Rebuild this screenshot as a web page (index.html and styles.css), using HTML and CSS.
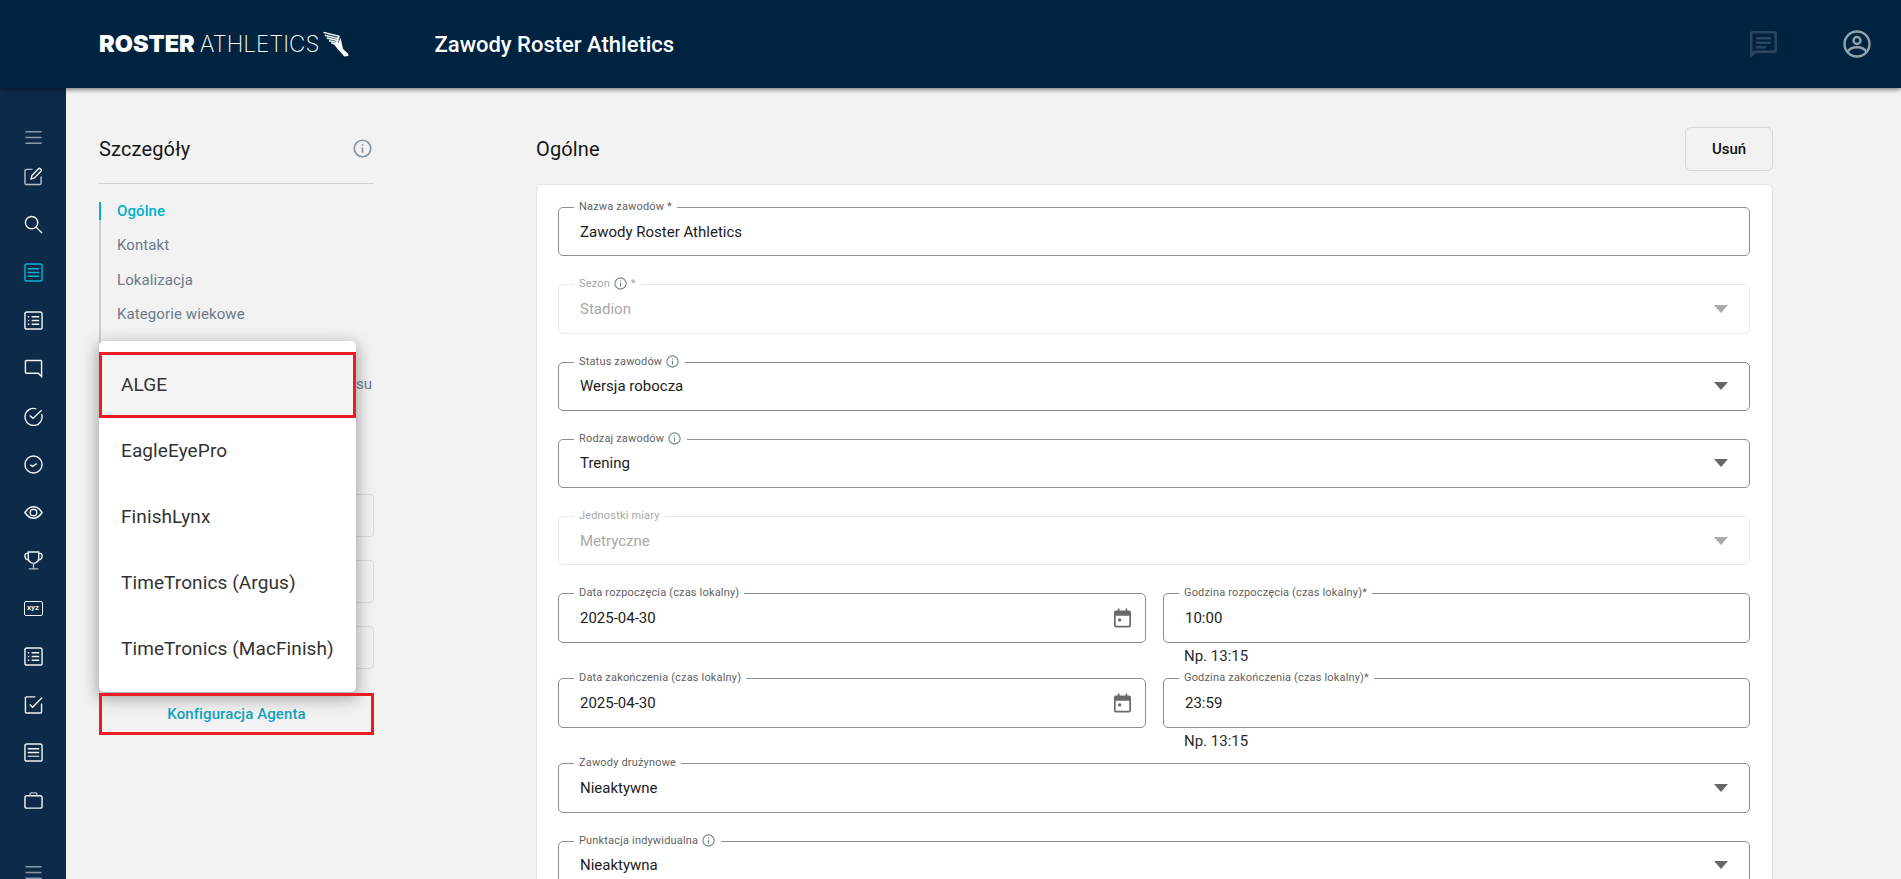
FILE: index.html
```html
<!DOCTYPE html>
<html lang="pl">
<head>
<meta charset="utf-8">
<title>Zawody Roster Athletics</title>
<link rel="stylesheet" href="styles.css">
</head>
<body>
<header class="topbar">
  <div class="logo">
    <span class="logo-bold">ROSTER</span><span class="logo-light">ATHLETICS</span>
    <svg class="logo-wing" viewBox="0 0 28 28" aria-hidden="true">
      <path class="wing-fill" d="M12 14.500 L15.500 19 L23 27.500 L27.500 27 L27 24.500 L21.500 19 L19 7.500 L17 12 Z"/>
      <path class="wing-line" d="M0.500 1.500 L18 6 M2 4.500 L17.500 8.500 M4 7.500 L17 10.500 M6.500 10.500 L16 12.500 M9 13 L15 14.500 M17 6 L14 14"/>
    </svg>
  </div>
  <h1 class="app-title">Zawody Roster Athletics</h1>
  <div class="top-actions">
    <svg class="top-chat" viewBox="0 0 27 27" aria-hidden="true"><path d="M3 0h21a3 3 0 0 1 3 3v16a3 3 0 0 1-3 3H6l-6 5V3a3 3 0 0 1 3-3Zm0 2.500a.5.5 0 0 0-.5.5v18l2.500-1.500h19a.5.5 0 0 0 .5-.5V3a.5.5 0 0 0-.5-.5ZM6 6h15v2.500H6Zm0 4.500h15V13H6ZM6 15h10v2.500H6Z"/></svg>
    <svg class="top-user" viewBox="0 0 28 28" aria-hidden="true"><circle cx="14" cy="14" r="12.500"/><circle cx="14" cy="10.500" r="3.500"/><path d="M4.500 22c2-3.500 5.500-4.800 9.500-4.800s7.500 1.300 9.500 4.800"/></svg>
  </div>
</header>
<div class="shell">
  <nav class="rail">
    <svg class="rail-icon dim rail-first" viewBox="0 0 20 20"><path d="M1.500 4h17M1.500 10h17M1.500 16h17"/></svg>
    <svg class="rail-icon" viewBox="0 0 20 20"><path class="dim-stroke" d="M9 2.500H2.500a1.500 1.500 0 0 0-1.500 1.500v13a1.500 1.500 0 0 0 1.500 1.500h14a1.500 1.500 0 0 0 1.500-1.500V10"/><path d="M7.500 12.500l.8-3.500L15.500 1.500c.8-.8 3.500 1.500 2.700 2.500L11 11.500Z"/></svg>
    <svg class="rail-icon" viewBox="0 0 20 20"><circle cx="8" cy="8" r="6.500"/><path d="M12.800 12.800L19 19"/></svg>
    <svg class="rail-icon active" viewBox="0 0 20 20"><rect x="1" y="1" width="18" height="18" rx="2"/><path d="M4 6h12M4 10h12M4 14h12"/></svg>
    <svg class="rail-icon" viewBox="0 0 20 20"><rect x="1" y="1" width="18" height="18" rx="2"/><path d="M8 6h8M8 10h8M8 14h8M4 6h1.500M4 10h1.500M4 14h1.500"/></svg>
    <svg class="rail-icon" viewBox="0 0 20 20"><path d="M2.500 1.500h15a1 1 0 0 1 1 1v16l-3.500-3.500H2.500a1 1 0 0 1-1-1v-11.500a1 1 0 0 1 1-1Z"/></svg>
    <svg class="rail-icon" viewBox="0 0 20 20"><path d="M18.500 7.500A9 9 0 1 1 13 2"/><path d="M6 9l3.500 3L18.500 3.500"/></svg>
    <svg class="rail-icon" viewBox="0 0 20 20"><circle cx="10" cy="10" r="9"/><path d="M6.500 10.500l2.500 1.500 4.500-3"/></svg>
    <svg class="rail-icon" viewBox="0 0 20 20"><path d="M1 10c2.500-4 5.500-6 9-6s6.500 2 9 6c-2.500 4-5.500 6-9 6s-6.500-2-9-6Z"/><circle cx="10" cy="10" r="3.500"/></svg>
    <svg class="rail-icon" viewBox="0 0 20 20"><path d="M4.500 1h11v6.500a5.500 5.500 0 0 1-11 0Z"/><path d="M4.500 2.500H3C0 2.500 0 9 4.800 9.500M15.500 2.500H17C20 2.500 20 9 15.200 9.500"/><path class="dim-stroke" d="M10 13v5.500M5 18.800h10"/></svg>
    <div class="rail-xyz">xyz</div>
    <svg class="rail-icon" viewBox="0 0 20 20"><rect x="1" y="1" width="18" height="18" rx="2"/><path d="M8 6h8M8 10h8M8 14h8M4 6h1.500M4 10h1.500M4 14h1.500"/></svg>
    <svg class="rail-icon" viewBox="0 0 20 20"><path d="M12 2H2.500a1 1 0 0 0-1 1v15a1 1 0 0 0 1 1h15a1 1 0 0 0 1-1V9"/><path d="M6 10l3 3 10-10"/></svg>
    <svg class="rail-icon" viewBox="0 0 20 20"><rect x="1" y="1" width="18" height="18" rx="2"/><path d="M4 6h12M4 10h12"/><path class="dim-stroke" d="M4 14h12"/></svg>
    <svg class="rail-icon" viewBox="0 0 20 20"><rect x="1" y="5" width="18" height="13" rx="2"/><path class="dim-stroke" d="M6.500 5V3a1 1 0 0 1 1-1h5a1 1 0 0 1 1 1v2"/></svg>
    <svg class="rail-icon dim rail-last" viewBox="0 0 20 20"><path d="M1.500 4h17M1.500 10h17M1.500 16h17"/></svg>
  </nav>
  <main class="content">
    <aside class="details">
      <div class="details-head">
        <h2 class="section-title">Szczegóły</h2>
        <svg class="info info-large" viewBox="0 0 18 18"><circle cx="9" cy="9" r="7.800"/><path d="M9 8v5M9 5v1.300"/></svg>
      </div>
      <ul class="steps">
        <li class="step step-active">Ogólne</li>
        <li class="step">Kontakt</li>
        <li class="step">Lokalizacja</li>
        <li class="step">Kategorie wiekowe</li>
      </ul>
      <div class="timing-label">Systemy pomiaru czasu</div>
      <div class="ghost-fields">
        <div class="ghost-field"></div>
        <div class="ghost-field"></div>
        <div class="ghost-field"></div>
      </div>
      <button class="agent-button" type="button">Konfiguracja Agenta</button>
      <ul class="menu">
        <li class="menu-item menu-item-selected">ALGE</li>
        <li class="menu-item">EagleEyePro</li>
        <li class="menu-item">FinishLynx</li>
        <li class="menu-item">TimeTronics (Argus)</li>
        <li class="menu-item">TimeTronics (MacFinish)</li>
      </ul>
    </aside>
    <section class="general">
      <div class="general-head">
        <h2 class="section-title">Ogólne</h2>
        <button class="delete-button" type="button">Usuń</button>
      </div>
      <form class="card">
        <div class="field row">
          <span class="label">Nazwa zawodów *</span>
          <span class="value">Zawody Roster Athletics</span>
        </div>
        <div class="field row field-disabled">
          <span class="label">Sezon <svg class="info" viewBox="0 0 18 18"><circle cx="9" cy="9" r="7.800"/><path d="M9 8v5M9 5v1.300"/></svg> *</span>
          <span class="value">Stadion</span>
          <span class="caret"></span>
        </div>
        <div class="field row">
          <span class="label">Status zawodów <svg class="info" viewBox="0 0 18 18"><circle cx="9" cy="9" r="7.800"/><path d="M9 8v5M9 5v1.300"/></svg></span>
          <span class="value">Wersja robocza</span>
          <span class="caret"></span>
        </div>
        <div class="field row">
          <span class="label">Rodzaj zawodów <svg class="info" viewBox="0 0 18 18"><circle cx="9" cy="9" r="7.800"/><path d="M9 8v5M9 5v1.300"/></svg></span>
          <span class="value">Trening</span>
          <span class="caret"></span>
        </div>
        <div class="field row field-disabled">
          <span class="label">Jednostki miary</span>
          <span class="value">Metryczne</span>
          <span class="caret"></span>
        </div>
        <div class="date-row">
          <div class="field">
            <span class="label">Data rozpoczęcia (czas lokalny)</span>
            <span class="value">2025-04-30</span>
            <svg class="calendar" viewBox="0 0 18 20"><path d="M4 0h1.800v2h6.400V0H14v2h2a2 2 0 0 1 2 2v14a2 2 0 0 1-2 2H2a2 2 0 0 1-2-2V4a2 2 0 0 1 2-2h2Zm-2.200 7.500V18a.2.2 0 0 0 .2.2h14a.2.2 0 0 0 .2-.2V7.500Z"/><circle cx="6" cy="12" r="1.800"/></svg>
          </div>
          <div class="time-col">
            <div class="field">
              <span class="label">Godzina rozpoczęcia (czas lokalny)*</span>
              <span class="value">10:00</span>
            </div>
            <div class="helper">Np. 13:15</div>
          </div>
        </div>
        <div class="date-row">
          <div class="field">
            <span class="label">Data zakończenia (czas lokalny)</span>
            <span class="value">2025-04-30</span>
            <svg class="calendar" viewBox="0 0 18 20"><path d="M4 0h1.800v2h6.400V0H14v2h2a2 2 0 0 1 2 2v14a2 2 0 0 1-2 2H2a2 2 0 0 1-2-2V4a2 2 0 0 1 2-2h2Zm-2.200 7.500V18a.2.2 0 0 0 .2.2h14a.2.2 0 0 0 .2-.2V7.500Z"/><circle cx="6" cy="12" r="1.800"/></svg>
          </div>
          <div class="time-col">
            <div class="field">
              <span class="label">Godzina zakończenia (czas lokalny)*</span>
              <span class="value">23:59</span>
            </div>
            <div class="helper">Np. 13:15</div>
          </div>
        </div>
        <div class="field row">
          <span class="label">Zawody drużynowe</span>
          <span class="value">Nieaktywne</span>
          <span class="caret"></span>
        </div>
        <div class="field row">
          <span class="label">Punktacja indywidualna <svg class="info" viewBox="0 0 18 18"><circle cx="9" cy="9" r="7.800"/><path d="M9 8v5M9 5v1.300"/></svg></span>
          <span class="value">Nieaktywna</span>
          <span class="caret"></span>
        </div>
      </form>
    </section>
  </main>
</div>
</body>
</html>
```
FILE: styles.css
```css
* { box-sizing: border-box; }
html, body { margin: 0; height: 100%; }
body {
  height: 879px;
  overflow: hidden;
  display: flex;
  flex-direction: column;
  background: #f2f2f2;
  color: #1c1c1c;
  font-family: Roboto, "Liberation Sans", sans-serif;
}
h1, h2, ul { margin: 0; padding: 0; }
ul { list-style: none; }

.topbar {
  position: relative;
  z-index: 3;
  flex: 0 0 88px;
  display: flex;
  align-items: center;
  padding-left: 99px;
  background: #002340;
  box-shadow: 0 2px 4px rgba(0, 0, 0, .45);
}
.logo { display: flex; align-items: center; width: 335.500px; color: #fff; font-family: Inter, Roboto, sans-serif; line-height: 1; }
.logo-bold { font-size: 23.500px; font-weight: 900; }
.logo-light { font-size: 22.500px; font-weight: 200; margin-left: 5px; }
.logo-wing { width: 26px; height: 26px; margin-left: 4px; margin-top: -1px; }
.wing-fill { fill: #fff; }
.wing-line { fill: none; stroke: #fff; stroke-width: 1.600; }
.app-title { color: #fff; font-size: 22px; font-weight: 500; }
.top-actions { margin-left: auto; display: flex; align-items: center; gap: 66px; padding-right: 30px; }
.top-chat { width: 27px; height: 27px; fill: #2a455c; margin-top: 1px; }
.top-user { width: 28px; height: 28px; fill: none; stroke: #93a1ad; stroke-width: 2.400; }

.shell { flex: 1; display: flex; min-height: 0; }
.rail {
  flex: 0 0 66px;
  display: flex;
  flex-direction: column;
  align-items: center;
  gap: 29px;
  padding-top: 40px;
  background: #0d2b48;
}
.rail-icon { flex: none; width: 19px; height: 19px; fill: none; stroke: #eef2f5; stroke-width: 1.500; }
.rail-icon.dim { stroke: #8a9aaa; }
.rail-icon.active { stroke: #00b3cf; }
.rail-first { margin-bottom: -9px; }
.dim-stroke { stroke: #b4bec8; }
.rail-xyz {
  flex: none;
  width: 19px;
  height: 15px;
  margin: 2px 0;
  border: 1.500px solid #eef2f5;
  border-radius: 2px;
  color: #eef2f5;
  font-size: 8px;
  font-weight: 700;
  line-height: 12px;
  text-align: center;
}
.rail-last { margin-top: 24px; }

.content { flex: 1; display: flex; padding: 39px 0 0 33px; min-width: 0; }
.details { position: relative; flex: 0 0 275px; margin-right: 162px; }
.details-head, .general-head { display: flex; align-items: center; justify-content: space-between; height: 44px; }
.details-head { height: 57px; padding: 0 2px 13px 0; border-bottom: 1px solid #d2d2d2; }
.section-title { font-size: 20px; font-weight: 400; letter-spacing: .15px; color: #161616; }
.info { display: inline-block; width: 13px; height: 13px; margin: 0 1px; vertical-align: -3px; fill: none; stroke: #6f7f8f; stroke-width: 1.500; }
.info-large { width: 19px; height: 19px; margin: 0; stroke: #8494a3; stroke-width: 1.600; }

.steps { margin-top: 18px; display: flex; flex-direction: column; gap: 16.400px; height: 143px; border-left: 2px solid #c9ced6; }
.step { padding-left: 16px; color: #6c7a8a; font-size: 15px; letter-spacing: .1px; line-height: 18px; }
.step-active { color: #00b0ca; font-weight: 500; margin-left: -2px; border-left: 2px solid #00b0ca; }
.timing-label { margin-top: 30px; padding-right: 2px; color: #6c7a8a; font-size: 15px; line-height: 18px; text-align: right; }
.ghost-fields { margin-top: 101px; display: flex; flex-direction: column; gap: 23px; }
.ghost-field { height: 43px; border: 1px solid #dcdcdc; border-radius: 4px; }
.agent-button {
  position: relative;
  z-index: 2;
  display: block;
  width: 100%;
  height: 42px;
  margin-top: 24px;
  border: 3px solid #ed1c24;
  background: transparent;
  color: #0fa2b8;
  font: 500 15px Roboto, sans-serif;
  letter-spacing: .1px;
}
.menu {
  position: absolute;
  left: 0;
  top: 214px;
  z-index: 1;
  width: 257px;
  padding: 11px 0 10px;
  border-radius: 5px;
  background: #fff;
  box-shadow: 0 5px 16px 2px rgba(0, 0, 0, .32);
}
.menu-item { display: flex; align-items: center; height: 66px; padding: 0 0 2px 22px; color: #333; font-size: 19px; letter-spacing: .1px; }
.menu-item-selected { padding-left: 19px; border: 3px solid #ed1c24; background: #f5f5f5; }

.general { flex: 0 0 1237px; }
.delete-button { width: 88px; height: 44px; border: 1px solid #d5d5d5; border-radius: 6px; background: transparent; color: #111; font: 500 15px Roboto, sans-serif; }
.card { margin-top: 13px; padding: 22px 22px 0 21px; border: 1px solid #e4e4e4; border-radius: 5px; background: #fff; }

.field { position: relative; display: flex; align-items: center; height: 49.250px; padding-left: 21px; border: 1px solid #8e8e8e; border-radius: 5px; }
.row { margin-bottom: 28px; }
.value { font-size: 15px; color: #1c1c1c; }
.label { position: absolute; left: 15px; top: -8px; padding: 0 5px; background: #fff; color: #5f5f5f; font-size: 11px; letter-spacing: .17px; line-height: 14px; white-space: nowrap; }
.caret { margin-left: auto; margin-right: 21px; border-style: solid; border-width: 8px 7px 0; border-color: #666 transparent transparent; }
.field-disabled { border-color: #ebebeb; }
.field-disabled .label, .field-disabled .value { color: #a8a8a8; }
.field-disabled .caret { border-top-color: #aaa; }
.calendar { position: absolute; right: 14px; top: 14px; width: 17px; height: 20px; fill: #6a6a6a; }

.date-row { display: grid; grid-template-columns: 588px 587px; gap: 17px; margin-bottom: 12.250px; }
.helper { margin-top: 3.500px; padding-left: 21px; font-size: 15px; line-height: 20px; color: #2a2a2a; }
```
